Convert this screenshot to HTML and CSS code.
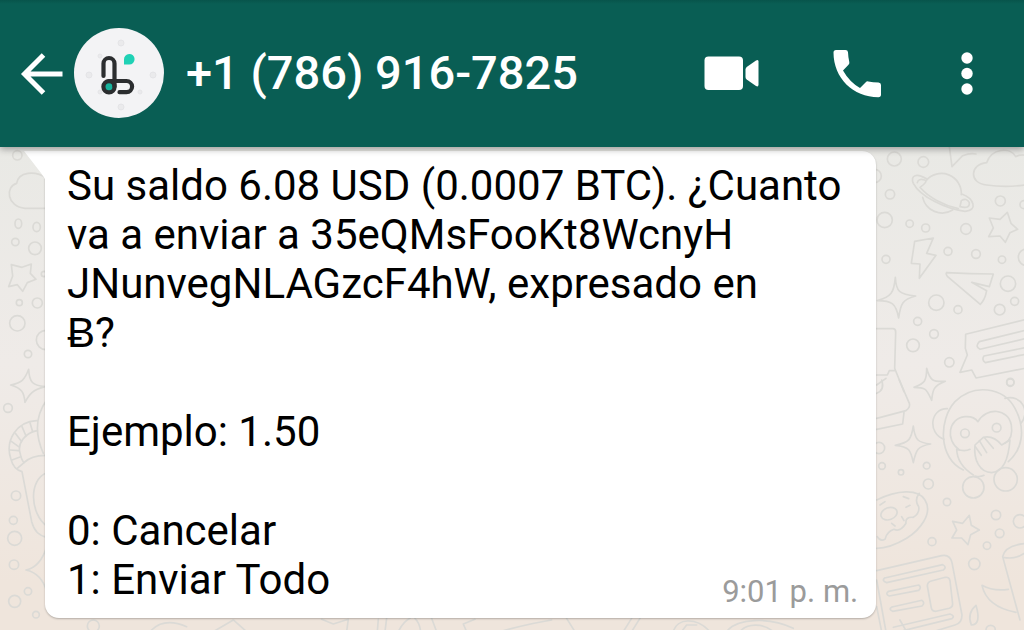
FILE: index.html
```html
<!DOCTYPE html>
<html lang="es">

<head>
    <meta charset="UTF-8" />
    <meta name="viewport" content="width=device-width, initial-scale=1" />
    <title>+1 (786) 916-7825</title>
    <link rel="stylesheet" href="styles.css">
</head>

<body>
    <header class="topbar">
        <button class="icon-btn back" aria-label="Atrás">
            <svg width="44" height="44" viewBox="0 0 44 44">
                <path d="M23.500 4 L4.500 23 L23.500 42 M4.500 23 H42.500" fill="none" stroke="#fff" stroke-width="5" />
            </svg>
        </button>
        <svg class="avatar" width="90" height="90" viewBox="0 0 90 90">
            <circle cx="45" cy="45" r="45" fill="#f3f3f5" />
            <g fill="#eaeaec" stroke="#e4e4e7" stroke-width="1">
                <circle cx="47" cy="15" r="3" />
                <circle cx="15" cy="47" r="3" />
                <circle cx="79" cy="47" r="3" />
                <circle cx="47" cy="79" r="3" />
                <circle cx="66" cy="64" r="2" />
                <circle cx="26" cy="64" r="2" />
                <circle cx="26" cy="28" r="2" />
            </g>
            <circle cx="35" cy="59" r="5" fill="#17b29c" />
            <path d="M29.500 48 V35.500 A5.500 5.500 0 0 1 40.500 35.500 V58.500 M35 53 H52.500 A5.600 5.600 0 0 1 52.500 64.200 H45.500" fill="none" stroke="#2b2d2f" stroke-width="4.2" stroke-linecap="round" />
            <circle cx="35" cy="58.700" r="5.600" fill="none" stroke="#2b2d2f" stroke-width="4.2" />
            <path d="M50 36.500 V31.500 A5.300 5.300 0 1 1 55.300 36.500 Z" fill="#1fd1b5" />
        </svg>
        <h1 class="contact">+1 (786) 916-7825</h1>
        <nav class="actions">
            <button class="icon-btn" aria-label="Videollamada">
                <svg width="56" height="36" viewBox="0 0 56 36">
                    <rect x="0.5" y="1.500" width="38.500" height="33.500" rx="4" fill="#fff" />
                    <path d="M41.500 14.500 Q41.500 13 42.700 12 L52 5.500 Q54.500 4 54.500 6.500 V29.500 Q54.500 32.400 52 31 L42.700 24.500 Q41.500 23.500 41.500 22 Z" fill="#fff" />
                </svg>
            </button>
            <button class="icon-btn" aria-label="Llamar">
                <svg width="50" height="50" viewBox="0 0 50 50">
                    <path d="M4 2 H13.500 Q15.800 2 16 4.300 Q16.200 9.500 17.300 14 Q17.700 15.600 16.500 16.800 L11 22.500 Q17.500 34 28 40 L33.500 34.500 Q34.600 33.200 36.300 33.400 Q41 34.500 46.500 34.600 Q49 34.700 49 37 V46.500 Q49 49.200 46.400 49.200 C21 49.200 1.500 30 1.500 4.500 Q1.500 2 4 2 Z" fill="#fff" />
                </svg>
            </button>
            <button class="icon-btn" aria-label="Más opciones">
                <svg width="26" height="50" viewBox="0 0 26 50">
                    <g fill="#fff">
                        <circle cx="13" cy="10" r="5.700" />
                        <circle cx="13" cy="25.500" r="5.700" />
                        <circle cx="13" cy="41" r="5.700" />
                    </g>
                </svg>
            </button>
        </nav>
    </header>

    <main class="chat">
        <svg class="wallpaper" viewBox="0 147 1024 483" preserveAspectRatio="xMidYMin slice" aria-hidden="true">
            <!-- right side, upper half -->
            <g transform="translate(870 140) scale(.3333)">
                <circle cx="73" cy="57" r="21" />
                <circle cx="160" cy="66" r="16" />
                <circle cx="60" cy="163" r="14" />
                <circle cx="44" cy="240" r="23" />
                <circle cx="14" cy="108" r="20" />
                <circle cx="119" cy="251" r="11" />
                <circle cx="167" cy="264" r="12" />
                <circle cx="288" cy="267" r="16" />
                <circle cx="391" cy="183" r="15" />
                <circle cx="462" cy="194" r="12" />
                <circle cx="234" cy="334" r="12" />
                <circle cx="318" cy="342" r="13" />
                <circle cx="396" cy="359" r="11" />
                <circle cx="48" cy="358" r="12" />
                <circle cx="470" cy="352" r="25" />
                <circle cx="414" cy="431" r="23" />
                <circle cx="434" cy="484" r="12" />
                <circle cx="389" cy="509" r="16" />
                <circle cx="199" cy="488" r="23" />
                <circle cx="264" cy="509" r="12" />
                <circle cx="143" cy="544" r="12" />
                <circle cx="192" cy="582" r="13" />
                <circle cx="129" cy="616" r="19" />
                <circle cx="238" cy="667" r="14" />
                <circle cx="421" cy="726" r="11" />
                <path d="M238 20 L246 80 L278 47 Q300 38 318 42" />
                <path d="M350 135 C295 130 300 72 350 68 C365 25 420 20 437 50 C455 40 480 45 495 65 L495 130 Q420 145 350 135 Z" />
                <path d="M158 172 A60 60 0 0 0 248 210 M168 122 A60 60 0 0 1 274 164" />
                <path d="M172 118 C140 98 120 105 130 130 C150 170 230 208 285 214 C325 212 312 175 275 162" />
                <path d="M150 142 C175 172 220 196 265 206 M142 128 Q145 114 164 120 Q175 125 150 142 M270 200 Q300 208 298 188 Q290 172 274 182 Z" />
                <path d="M412 217 L423 250 L443 268 L420 278 L406 307 L390 288 L356 290 L370 264 L358 234 L390 238 Z" />
                <path d="M134 304 L190 294 L170 340 L198 346 L148 415 L150 372 L124 370 Z" />
                <path d="M76 412 C78 455 88 463 137 468 C98 478 92 490 86 534 C78 490 66 482 22 482 C64 470 72 458 76 412 Z" />
                <path d="M230 398 Q300 402 370 402 L358 440 L305 427 L350 452 Q345 480 331 493 L232 409 Q226 400 230 398" />
                <path d="M20 566 H70 Q78 567 77 578 L74 685 L102 755 M20 705 H52 L58 692 H76 M20 735 L48 715" />
                <path d="M470 538 L287 583 L286 625 L292 645 L270 697 L305 690 L318 714 L470 684" />
                <path d="M470 570 L328 605 Q314 620 330 628 L470 595 M470 622 L342 648 Q334 660 346 668 L470 642" />
                <path d="M170 685 C180 722 188 726 226 724 C190 738 188 750 185 781 C170 750 170 742 132 742 C165 730 170 722 170 685 Z" />
            </g>
            <!-- right side, lower half -->
            <g transform="translate(870 380) scale(.3333)">
                <path d="M88 0 L118 70 Q122 82 108 92 L20 115 M102 98 L98 132 L20 148 M20 40 Q45 30 35 0" />
                <path d="M130 138 C135 180 143 188 182 192 C143 198 138 210 130 248 C122 210 118 200 76 196 C118 188 124 178 130 138 Z" />
                <circle cx="27" cy="204" r="17" />
                <circle cx="36" cy="258" r="10" />
                <circle cx="93" cy="277" r="8" />
                <circle cx="170" cy="257" r="10" />
                <circle cx="175" cy="312" r="15" />
                <circle cx="231" cy="366" r="11" />
                <circle cx="186" cy="485" r="12" />
                <circle cx="378" cy="405" r="14" />
                <circle cx="389" cy="460" r="13" />
                <circle cx="351" cy="497" r="11" />
                <circle cx="450" cy="424" r="20" />
                <circle cx="313" cy="552" r="17" />
                <circle cx="421" cy="8" r="11" />
                <!-- monkey -->
                <path d="M280 270 C205 235 205 120 255 65 C310 10 400 20 435 85 C470 150 455 210 415 245" />
                <path d="M232 86 C180 85 172 160 222 178 M405 55 C455 42 482 95 453 130" />
                <path d="M268 210 C225 180 235 115 285 110 Q312 108 324 125 C350 80 415 85 424 135 C428 160 422 180 405 190" />
                <path d="M300 208 Q285 216 260 208 Q262 255 310 285 M315 195 C310 240 330 278 365 278 C400 274 415 240 420 180 L395 195 Q370 165 340 172 L315 195 M315 288 Q330 292 342 286" />
                <path d="M328 182 L350 218 M344 174 L370 205 M316 200 L334 226" />
                <circle cx="285" cy="160" r="13" />
                <circle cx="380" cy="143" r="13" />
                <circle cx="310" cy="322" r="32" />
                <circle cx="407" cy="298" r="35" />
                <!-- doughnut -->
                <path d="M20 360 C80 330 145 325 165 360 C190 400 150 450 110 475 Q60 505 20 505" />
                <path d="M148 340 Q132 360 146 380 Q150 400 130 412 Q105 410 108 430 Q90 458 72 448 Q50 455 45 478 Q30 485 22 470" />
                <ellipse cx="57" cy="401" rx="25" ry="18" transform="rotate(-20 57 401)" />
                <path d="M100 350 L116 356 M108 382 L120 376 M30 375 L45 365 M95 410 L102 422 M65 430 L75 438" />
                <path d="M298 406 L304 436 L328 450 L302 464 L294 494 L275 474 L246 474 L260 450 L248 424 L278 430 Z" />
                <!-- newspaper -->
                <path d="M20 572 L215 527 Q240 522 246 548 L276 705 Q276 730 255 735 L190 755 M20 600 L48 755 M20 680 L35 755" />
                <path d="M44 594 L218 554 Q232 562 220 570 L50 608 Q34 602 44 594 M56 634 L146 615 Q156 622 146 631 L58 648 Q44 642 56 634 M66 681 L156 661 Q166 668 156 678 L68 694 Q54 688 66 681 M70 742 L240 702 Q256 708 246 716 L100 752" />
                <path d="M184 603 L226 592 Q238 590 240 602 L248 672 Q248 682 238 685 L198 694 Q186 694 184 684 L172 618 Q172 606 184 603 Z" />
                <path d="M470 490 Q405 495 398 530 L450 720 M400 532 Q440 540 470 515 M415 628 Q370 635 336 616 Q350 680 438 697" />
                <path d="M318 676 Q290 700 304 735 Q335 735 318 676 Z" />
                <circle cx="362" cy="750" r="14" />
            </g>
            <!-- left side -->
            <g transform="translate(0 140) scale(.3333)">
                <circle cx="52" cy="46" r="14" />
                <path d="M140 205 H75 C20 200 15 140 50 130 C55 95 105 90 140 115" />
                <ellipse cx="55" cy="251" rx="10" ry="14" />
                <ellipse cx="110" cy="261" rx="11" ry="14" />
                <circle cx="46" cy="306" r="11" />
                <circle cx="105" cy="325" r="19" />
                <path d="M34 374 L66 382 L94 372 L91 400 L108 418 L82 428 L68 454 L52 434 L26 440 L38 408 Z" />
                <circle cx="58" cy="488" r="9" />
                <circle cx="112" cy="489" r="15" />
                <circle cx="52" cy="550" r="23" />
                <circle cx="138" cy="600" r="29" />
                <circle cx="84" cy="642" r="11" />
                <circle cx="132" cy="402" r="8" />
                <path d="M86 688 C88 728 98 736 135 740 C98 750 88 762 75 787 C72 756 65 745 32 735 C65 728 74 720 86 688 Z" />
            </g>
            <g transform="translate(0 380) scale(.3333)">
                <circle cx="24" cy="84" r="13" />
                <path d="M140 60 Q90 130 130 220 M110 122 C50 125 15 180 32 235 Q40 268 66 275 L95 425 Q105 465 140 472" />
                <path d="M112 152 C75 158 52 190 60 218 Q64 240 72 248 Q95 225 140 226 M140 278 C85 300 90 400 140 438" />
                <path d="M90 128 L98 155 M66 140 L78 168 M46 160 L64 184 M34 184 L56 200 M30 210 L56 212 M36 240 L62 230 M52 265 L72 248" />
                <circle cx="48" cy="347" r="14" />
                <circle cx="40" cy="421" r="12" />
                <circle cx="44" cy="475" r="21" />
                <circle cx="42" cy="554" r="14" />
                <path d="M140 500 Q122 560 78 570 Q125 580 140 635" />
                <circle cx="84" cy="634" r="11" />
                <circle cx="44" cy="664" r="18" />
                <circle cx="108" cy="704" r="10" />
            </g>
            <!-- strip under the bubble -->
            <g transform="translate(0 560) scale(.3333)">
                <circle cx="280" cy="198" r="18" />
                <path d="M965 178 L1000 192 L1045 178 L1040 215 M1135 178 L1132 215 M1160 175 L1155 215 M1195 215 Q1210 185 1230 175 M1245 175 Q1260 190 1262 215 M1295 175 L1310 215 M1400 215 L1390 192 L1425 178 M1500 215 Q1590 190 1655 180 M1700 175 L1725 215 M1870 215 L1895 175 M1895 215 L1920 175" />
                <path d="M450 215 Q490 170 560 200 M640 215 L700 180 L740 215 M2020 215 C2030 175 2090 170 2130 215 M2045 215 L2060 195 H2090 M2180 215 C2210 175 2310 170 2380 205 M2220 215 C2240 190 2290 188 2320 215 M2700 180 L2720 215" />
            </g>
        </svg>

        <article class="bubble">
            <svg class="tail" width="22" height="30" viewBox="0 0 22 30">
                <path d="M0 0 H22 V30 Q20 26 17 22 Z" fill="#fff" />
            </svg>
            <p>Su saldo 6.08 USD (0.0007 BTC). ¿Cuanto<br>
                va a enviar a 35eQMsFooKt8WcnyH<br>
                JNunvegNLAGzcF4hW, expresado en<br>
                Ƀ?</p>
            <p>Ejemplo: 1.50</p>
            <div class="last-row">
                <p>0: Cancelar<br>
                    1: Enviar Todo</p>
                <time class="time" datetime="21:01">9:01 p. m.</time>
            </div>
        </article>
    </main>
</body>

</html>
```
FILE: styles.css
```css
body {
    margin: 0;
    min-height: 100vh;
    display: flex;
    flex-direction: column;
    font-family: Roboto, "Liberation Sans", sans-serif;
    background-color: #eeeae6;
}

.topbar {
    position: relative;
    z-index: 1;
    display: flex;
    align-items: center;
    padding: 28px 44px 29px 20px;
    background: linear-gradient(#07544b, #095e54 4px);
    box-shadow: 0 2px 7px rgba(0, 0, 0, 0.35);
    color: #fff;
}

.icon-btn {
    display: flex;
    padding: 0;
    border: none;
    background: none;
    cursor: pointer;
}

.avatar {
    margin: 0 22px 0 10px;
    flex: none;
}

.contact {
    flex: 1;
    margin: 0;
    font-size: 47px;
    line-height: 54px;
    font-weight: 500;
    white-space: nowrap;
}

.actions {
    display: flex;
    align-items: center;
    gap: 72px;
}

.chat {
    position: relative;
    flex: 1;
    padding: 4px 45px 12px;
    background: linear-gradient(#e9e9e5, #efebe8 45%, #efe5dc 90%);
    overflow: hidden;
}

.wallpaper {
    position: absolute;
    top: 0;
    left: 0;
    width: 100%;
    height: 100%;
    fill: none;
    stroke: #dbdad6;
    stroke-width: 5;
    stroke-linejoin: round;
    stroke-linecap: round;
}

.bubble {
    position: relative;
    display: flex;
    flex-direction: column;
    gap: 50px;
    width: 89%;
    box-sizing: border-box;
    padding: 10px 18px 14px 22px;
    border-radius: 0 14px 14px 14px;
    background-color: #fff;
    box-shadow: 0 1px 2px rgba(0, 0, 0, 0.25);
    color: #000;
    font-size: 42px;
    line-height: 49px;
}

.bubble p {
    margin: 0;
}

.tail {
    position: absolute;
    top: 0;
    left: -21px;
}

.last-row {
    display: flex;
    justify-content: space-between;
    align-items: flex-end;
}

.time {
    color: #9b9b9b;
    font-size: 31px;
    line-height: 24px;
}
```
